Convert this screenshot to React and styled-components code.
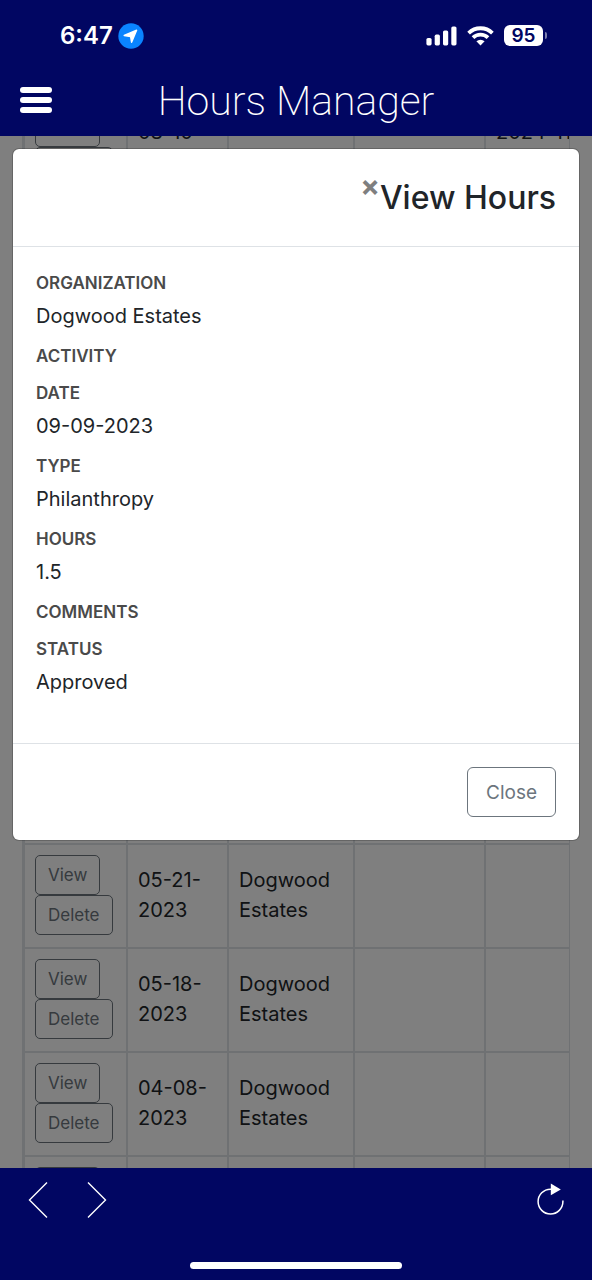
import React from "react";
import styled, { createGlobalStyle } from "styled-components";

const Global = createGlobalStyle`
  *, *::before, *::after { box-sizing: border-box; }
  body { margin: 0; background: #010662; }
  body, button { font-family: Inter, "Liberation Sans", sans-serif; }
  h1, h2, p, dl, dt, dd { margin: 0; }
`;

const Screen = styled.div`
  display: flex;
  flex-direction: column;
  height: 100vh;
  color: #212529;
  font-size: 20px;
  line-height: 30px;
`;

const TopBar = styled.header`
  flex: none;
  background: #010662;
  color: #fff;
`;

const StatusBar = styled.div`
  display: flex;
  align-items: center;
  justify-content: space-between;
  height: 71px;
  padding: 0 45px 0 60px;
`;

const StatusGroup = styled.div`
  display: flex;
  align-items: center;
  gap: ${(p) => p.$gap}px;
`;

const Clock = styled.span`
  font-size: 24px;
  font-weight: 600;
`;

const Battery = styled.span`
  display: flex;
  align-items: center;
  gap: 2px;
`;

const BatteryLevel = styled.span`
  width: 39px;
  height: 21px;
  border-radius: 6px;
  background: #fff;
  color: #010662;
  font-size: 19px;
  font-weight: 600;
  line-height: 21px;
  text-align: center;
`;

const BatteryTip = styled.span`
  width: 2px;
  height: 7px;
  border-radius: 0 2px 2px 0;
  background: #7b7eae;
`;

const TitleBar = styled.div`
  display: grid;
  grid-template-columns: 52px 1fr 52px;
  align-items: center;
  height: 65px;
  padding: 0 20px 8px;
`;

const AppTitle = styled.h1`
  padding-top: 2px;
  font-family: Roboto, sans-serif;
  font-size: 41px;
  font-weight: 200;
  line-height: 52px;
  text-align: center;
  white-space: nowrap;
`;

const IconButton = styled.button`
  display: flex;
  padding: 0;
  border: 0;
  background: none;
  color: #fff;
  cursor: pointer;
`;

const Main = styled.main`
  position: relative;
  flex: 1;
  min-height: 0;
  overflow: hidden;
  background: #fff;
`;

const TableFrame = styled.div`
  height: 100%;
  margin: 0 22px;
  overflow: hidden;
  border: solid #dee2e6;
  border-width: 0 1px;
`;

const HoursTable = styled.table`
  width: 607px;
  margin-top: -41px;
  border-collapse: collapse;
  table-layout: fixed;
`;

const Row = styled.tr`
  height: ${(p) => p.$height || 104}px;
`;

const Cell = styled.td`
  padding: 10px;
  border: 2px solid #dee2e6;
  vertical-align: top;
`;

const TextCell = styled(Cell)`
  padding-top: 20px;
  white-space: ${(p) => (p.$nowrap ? "nowrap" : "normal")};
`;

const Actions = styled.div`
  display: flex;
  flex-direction: column;
  align-items: flex-start;
`;

const OutlineButton = styled.button`
  height: ${(p) => (p.$large ? 50 : 40)}px;
  padding: 0 ${(p) => (p.$large ? 18 : 12)}px;
  border: 1px solid #6c757d;
  border-radius: ${(p) => (p.$large ? 6 : 5)}px;
  background: none;
  color: #6c757d;
  font-size: ${(p) => (p.$large ? 19 : 17)}px;
  cursor: pointer;
`;

const Backdrop = styled.div`
  position: absolute;
  inset: 0;
  display: flex;
  align-items: flex-start;
  padding: 12px;
  background: rgba(0, 0, 0, 0.5);
`;

const Dialog = styled.section`
  flex: 1;
  border: 1px solid rgba(0, 0, 0, 0.2);
  border-radius: 7px;
  background: #fff;
  background-clip: padding-box;
`;

const DialogHeader = styled.div`
  display: flex;
  justify-content: flex-end;
  padding: 24px 23px;
  border-bottom: 1px solid #dee2e6;
`;

const DialogTitle = styled.h2`
  font-size: 32px;
  font-weight: 500;
  line-height: 49px;
`;

const Dismiss = styled.button`
  align-self: flex-start;
  padding: 0;
  border: 0;
  background: none;
  color: #7f7f7f;
  font-size: 29px;
  font-weight: 700;
  line-height: 26px;
  cursor: pointer;
`;

const Details = styled.dl`
  padding: 24px 23px 33px;
`;

const Detail = styled.div`
  padding-bottom: 13px;
`;

const Label = styled.dt`
  color: #4a4a4a;
  font-size: 17px;
  font-weight: 600;
  line-height: 24px;
  text-transform: uppercase;
`;

const Value = styled.dd`
  padding-top: 6px;
`;

const DialogFooter = styled.div`
  display: flex;
  justify-content: flex-end;
  padding: 23px;
  border-top: 1px solid #dee2e6;
`;

const BottomBar = styled.footer`
  display: flex;
  flex: none;
  flex-direction: column;
  justify-content: space-between;
  height: 112px;
  padding: 13px 28px 11px;
  background: #010662;
`;

const NavRow = styled.nav`
  display: flex;
  gap: 39px;
`;

const Reload = styled(IconButton)`
  margin-left: auto;
`;

const HomeIndicator = styled.div`
  align-self: center;
  width: 212px;
  height: 7px;
  border-radius: 4px;
  background: #fff;
`;

const columns = [103, 101, 126, 131, 146];

const entries = [
  { date: "05-21-2023", organization: "Dogwood Estates" },
  { date: "05-18-2023", organization: "Dogwood Estates" },
  { date: "04-08-2023", organization: "Dogwood Estates" },
  { date: "", organization: "" },
];

const details = [
  ["Organization", "Dogwood Estates"],
  ["Activity", ""],
  ["Date", "09-09-2023"],
  ["Type", "Philanthropy"],
  ["Hours", "1.5"],
  ["Comments", ""],
  ["Status", "Approved"],
];

function EntryRow({ date, organization, created, height }) {
  return (
    <Row $height={height}>
      <Cell>
        <Actions>
          <OutlineButton type="button">View</OutlineButton>
          <OutlineButton type="button">Delete</OutlineButton>
        </Actions>
      </Cell>
      <TextCell>{date}</TextCell>
      <TextCell>{organization}</TextCell>
      <TextCell />
      <TextCell $nowrap>{created}</TextCell>
    </Row>
  );
}

export default function App() {
  return (
    <Screen>
      <Global />
      <TopBar>
        <StatusBar>
          <StatusGroup $gap={5}>
            <Clock>6:47</Clock>
            <svg width="26" height="26" viewBox="0 0 26 26" aria-hidden="true">
              <circle cx="13" cy="13" r="12.7" fill="#0a84ff" />
              <path
                d="M18.6 7.2 13.6 19.3 12.6 13.6 6.2 12.5Z"
                fill="#fff"
                stroke="#fff"
                strokeWidth="1.4"
                strokeLinejoin="round"
              />
            </svg>
          </StatusGroup>
          <StatusGroup $gap={10}>
            <svg width="31" height="20" viewBox="0 0 31 20" fill="#fff" aria-hidden="true">
              <rect x="0.4" y="12" width="5.2" height="7.4" rx="1.6" />
              <rect x="8.7" y="8.6" width="5.2" height="10.8" rx="1.6" />
              <rect x="17" y="4.4" width="5.2" height="15" rx="1.6" />
              <rect x="25.3" y="0.4" width="5.2" height="19" rx="1.6" />
            </svg>
            <svg width="27" height="20" viewBox="0 0 27 20" aria-hidden="true">
              <g fill="none" stroke="#fff" strokeWidth="3.8">
                <path d="M1.6 7.1A17 17 0 0 1 25.4 7.1" />
                <path d="M6 11.7A10.8 10.8 0 0 1 21 11.7" />
              </g>
              <path d="M9.4 15.3A6 6 0 0 1 17.6 15.3L13.5 19.4Z" fill="#fff" />
            </svg>
            <Battery>
              <BatteryLevel>95</BatteryLevel>
              <BatteryTip />
            </Battery>
          </StatusGroup>
        </StatusBar>
        <TitleBar>
          <IconButton type="button" aria-label="Menu">
            <svg width="32" height="26" viewBox="0 0 32 26" fill="#fff" aria-hidden="true">
              <rect y="0" width="32" height="6" rx="3" />
              <rect y="10" width="32" height="6" rx="3" />
              <rect y="20" width="32" height="6" rx="3" />
            </svg>
          </IconButton>
          <AppTitle>Hours Manager</AppTitle>
        </TitleBar>
      </TopBar>

      <Main>
        <TableFrame>
          <HoursTable>
            <colgroup>
              {columns.map((width, i) => (
                <col key={i} width={width} />
              ))}
            </colgroup>
            <tbody>
              <EntryRow date="08-10-" created="2024-11-" height={748} />
              {entries.map((entry, i) => (
                <EntryRow key={i} {...entry} />
              ))}
            </tbody>
          </HoursTable>
        </TableFrame>

        <Backdrop>
          <Dialog role="dialog" aria-modal="true" aria-labelledby="dialog-title">
            <DialogHeader>
              <Dismiss type="button" aria-label="Dismiss">×</Dismiss>
              <DialogTitle id="dialog-title">View Hours</DialogTitle>
            </DialogHeader>
            <Details>
              {details.map(([label, value]) => (
                <Detail key={label}>
                  <Label>{label}</Label>
                  {value && <Value>{value}</Value>}
                </Detail>
              ))}
            </Details>
            <DialogFooter>
              <OutlineButton type="button" $large>Close</OutlineButton>
            </DialogFooter>
          </Dialog>
        </Backdrop>
      </Main>

      <BottomBar>
        <NavRow aria-label="History">
          <IconButton type="button" aria-label="Back">
            <svg width="20" height="38" viewBox="0 0 20 38" fill="none" stroke="#fff" strokeWidth="1.4" aria-hidden="true">
              <path d="M19 1.5 1.5 19 19 36.5" />
            </svg>
          </IconButton>
          <IconButton type="button" aria-label="Forward">
            <svg width="20" height="38" viewBox="0 0 20 38" fill="none" stroke="#fff" strokeWidth="1.4" aria-hidden="true">
              <path d="M1 1.5 18.5 19 1 36.5" />
            </svg>
          </IconButton>
          <Reload type="button" aria-label="Reload">
            <svg width="27" height="38" viewBox="0 0 27 38" aria-hidden="true">
              <path d="M14.5 8.2H13.5A12.4 12.4 0 1 0 25.9 20.6V19.6" fill="none" stroke="#fff" strokeWidth="1.5" />
              <path d="M13.8 2.5 23.8 8.4 13.8 14.2Z" fill="#fff" />
            </svg>
          </Reload>
        </NavRow>
        <HomeIndicator />
      </BottomBar>
    </Screen>
  );
}
